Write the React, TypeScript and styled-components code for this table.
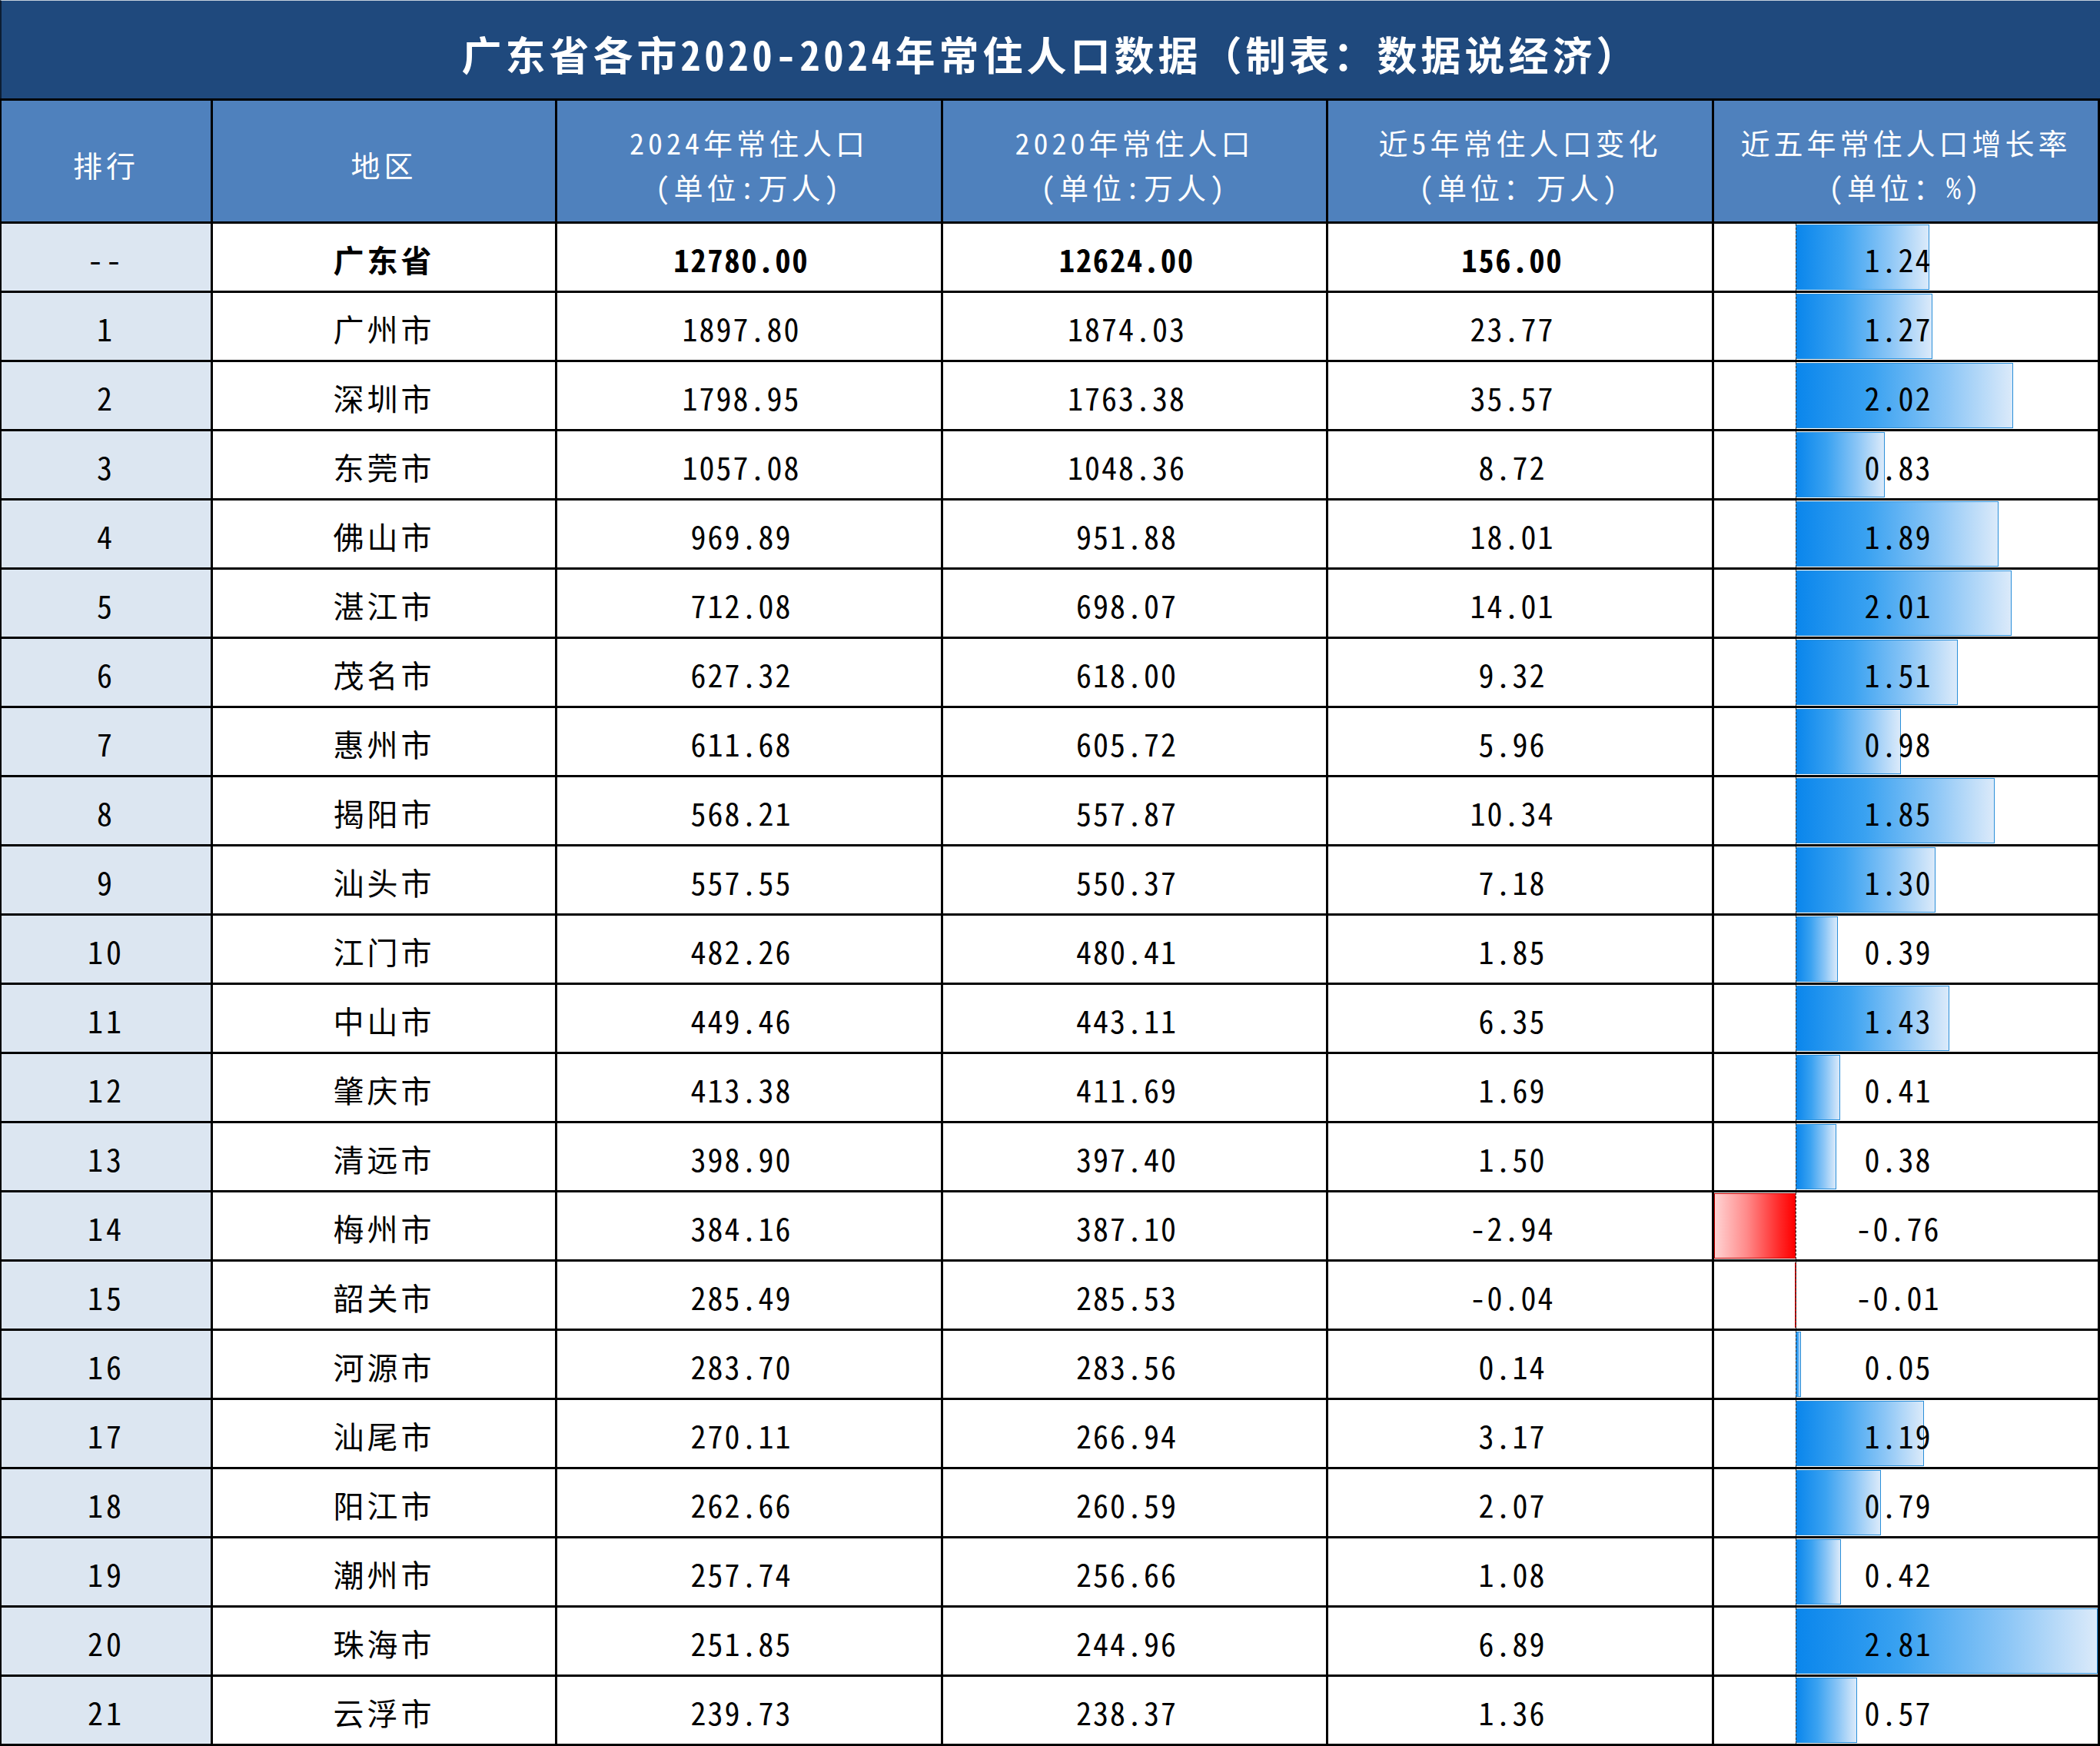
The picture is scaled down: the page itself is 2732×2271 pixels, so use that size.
import React from 'react';
import styled, { createGlobalStyle } from 'styled-components';

const FONT = `"Noto Sans Mono CJK SC", "Noto Sans CJK SC", "Liberation Sans", sans-serif`;

const GlobalStyle = createGlobalStyle`
  html, body { margin: 0; padding: 0; background: #ffffff; }
  body { font-family: ${FONT}; }
`;

const Sheet = styled.div`
  width: 2732px;
  height: 2271px;
  display: flex;
  flex-direction: column;
  overflow: hidden;
`;

const TitleBar = styled.div`
  box-sizing: border-box;
  height: 128px;
  border-top: 1px solid #c6d0dc;
  border-left: 2px solid #0c1d33;
  background: #1f497d;
  color: #ffffff;
  display: flex;
  align-items: center;
  justify-content: center;
  padding-top: 10px;
  font-family: ${FONT};
  font-weight: 700;
  font-size: 52px;
  letter-spacing: 5px;
`;

const Grid = styled.div`
  display: grid;
  grid-template-columns: 272px 445px 499px 498px 499px 499px;
  grid-template-rows: 157px repeat(22, 87px);
  gap: 3px;
  padding: 3px 3px 3px 2px;
  background: #000000;
`;

const HeadCell = styled.div`
  background: #4f81bd;
  color: #ffffff;
  display: flex;
  flex-direction: column;
  align-items: center;
  justify-content: center;
  padding-top: 8px;
  box-sizing: border-box;
  font-family: ${FONT};
  font-size: 38px;
  line-height: 58px;
  letter-spacing: 5px;
  white-space: nowrap;
`;

const Cell = styled.div<{ $rank?: boolean; $bold?: boolean; $num?: boolean }>`
  background: ${(p) => (p.$rank ? '#dce6f1' : '#ffffff')};
  color: #000000;
  display: flex;
  align-items: center;
  justify-content: center;
  box-sizing: border-box;
  padding-right: ${(p) => (p.$num ? '20px' : '0')};
  padding-top: 4px;
  font-family: ${FONT};
  font-size: 40px;
  font-weight: ${(p) => (p.$bold ? 700 : 400)};
  letter-spacing: ${(p) => (p.$num ? '2px' : '4px')};
  white-space: nowrap;
`;

const BarCell = styled.div`
  position: relative;
  background: #ffffff;
  overflow: hidden;
`;

const Axis = styled.div`
  position: absolute;
  top: 0;
  bottom: 0;
  width: 0;
  border-left: 1px dashed #333333;
  z-index: 2;
`;

const Bar = styled.div<{ $neg: boolean }>`
  position: absolute;
  top: 1px;
  bottom: 1px;
  box-sizing: border-box;
  background: ${(p) =>
    p.$neg
      ? 'linear-gradient(to right, #ffd3d3 0%, #ff8a8a 40%, #ff2a2a 80%, #ff0000 100%)'
      : 'linear-gradient(to right, #0a86ec 0%, #3aa2f1 35%, #8cc6f6 70%, #dbeafa 100%)'};
  border: 1px solid ${(p) => (p.$neg ? '#c00000' : '#2b8fd9')};
`;

const BarValue = styled.div`
  position: relative;
  z-index: 3;
  height: 100%;
  display: flex;
  align-items: center;
  justify-content: center;
  padding-right: 20px;
  padding-top: 4px;
  box-sizing: border-box;
  font-family: ${FONT};
  font-size: 40px;
  letter-spacing: 2px;
  color: #000000;
  white-space: nowrap;
`;

type Row = [string, string, string, string, string, string];

const rows: Row[] = [
  ['--', '广东省', '12780.00', '12624.00', '156.00', '1.24'],
  ['1', '广州市', '1897.80', '1874.03', '23.77', '1.27'],
  ['2', '深圳市', '1798.95', '1763.38', '35.57', '2.02'],
  ['3', '东莞市', '1057.08', '1048.36', '8.72', '0.83'],
  ['4', '佛山市', '969.89', '951.88', '18.01', '1.89'],
  ['5', '湛江市', '712.08', '698.07', '14.01', '2.01'],
  ['6', '茂名市', '627.32', '618.00', '9.32', '1.51'],
  ['7', '惠州市', '611.68', '605.72', '5.96', '0.98'],
  ['8', '揭阳市', '568.21', '557.87', '10.34', '1.85'],
  ['9', '汕头市', '557.55', '550.37', '7.18', '1.30'],
  ['10', '江门市', '482.26', '480.41', '1.85', '0.39'],
  ['11', '中山市', '449.46', '443.11', '6.35', '1.43'],
  ['12', '肇庆市', '413.38', '411.69', '1.69', '0.41'],
  ['13', '清远市', '398.90', '397.40', '1.50', '0.38'],
  ['14', '梅州市', '384.16', '387.10', '-2.94', '-0.76'],
  ['15', '韶关市', '285.49', '285.53', '-0.04', '-0.01'],
  ['16', '河源市', '283.70', '283.56', '0.14', '0.05'],
  ['17', '汕尾市', '270.11', '266.94', '3.17', '1.19'],
  ['18', '阳江市', '262.66', '260.59', '2.07', '0.79'],
  ['19', '潮州市', '257.74', '256.66', '1.08', '0.42'],
  ['20', '珠海市', '251.85', '244.96', '6.89', '2.81'],
  ['21', '云浮市', '239.73', '238.37', '1.36', '0.57'],
];

const headers: [string, string?][] = [
  ['排行'],
  ['地区'],
  ['2024年常住人口', '(单位:万人)'],
  ['2020年常住人口', '(单位:万人)'],
  ['近5年常住人口变化', '(单位：万人)'],
  ['近五年常住人口增长率', '(单位：%)'],
];

const values = rows.map((r) => parseFloat(r[5]));
const MIN = Math.min(0, ...values);
const MAX = Math.max(0, ...values);
const SPAN = MAX - MIN;
const axisPct = ((0 - MIN) / SPAN) * 100;

function DataBar({ text }: { text: string }) {
  const v = parseFloat(text);
  const w = (Math.abs(v) / SPAN) * 100;
  const left = v < 0 ? axisPct - w : axisPct;
  return (
    <BarCell>
      <Bar $neg={v < 0} style={{ left: `${left}%`, width: `${w}%` }} />
      <Axis style={{ left: `${axisPct}%` }} />
      <BarValue>{text}</BarValue>
    </BarCell>
  );
}

export default function App() {
  return (
    <>
      <GlobalStyle />
      <Sheet>
        <TitleBar>广东省各市2020-2024年常住人口数据（制表：数据说经济）</TitleBar>
        <Grid>
          {headers.map(([a, b], i) => (
            <HeadCell key={`h${i}`}>
              <span>{a}</span>
              {b && <span>{b}</span>}
            </HeadCell>
          ))}
          {rows.map((r, i) => {
            const bold = i === 0;
            return (
              <React.Fragment key={`r${i}`}>
                <Cell $rank>{r[0]}</Cell>
                <Cell $bold={bold}>{r[1]}</Cell>
                <Cell $bold={bold} $num>{r[2]}</Cell>
                <Cell $bold={bold} $num>{r[3]}</Cell>
                <Cell $bold={bold} $num>{r[4]}</Cell>
                <DataBar text={r[5]} />
              </React.Fragment>
            );
          })}
        </Grid>
      </Sheet>
    </>
  );
}
